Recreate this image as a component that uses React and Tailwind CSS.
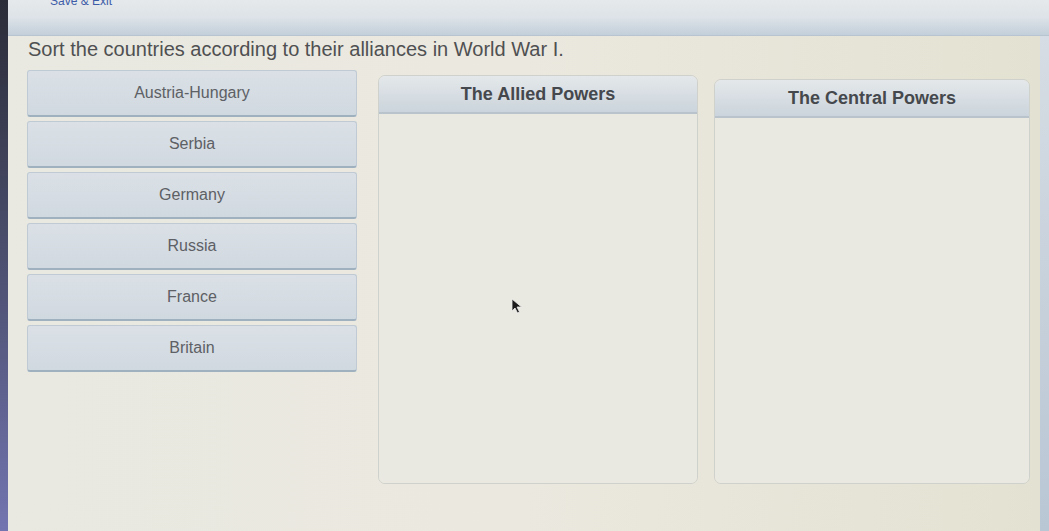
import React from "react";

const countries = ["Austria-Hungary", "Serbia", "Germany", "Russia", "France", "Britain"];

function DragItem({ label }) {
  return (
    <li className="flex h-[47px] items-center justify-center rounded-[3px] border border-[#bfcad4] border-b-2 border-b-[#9fb0bf] bg-gradient-to-b from-[#dae0e6] to-[#d1d9e0] text-[16px] text-[#5d6065]">
      {label}
    </li>
  );
}

function DropColumn({ title, className }) {
  return (
    <div className={`flex flex-col overflow-hidden rounded-[7px] border border-[#cfd1cc] ${className}`}>
      <div className="flex h-[38px] shrink-0 items-center justify-center border-b-2 border-[#b9c3cc] bg-gradient-to-b from-[#e4e8ea] to-[#cbd4dc] text-[18px] font-bold text-[#45484c]">
        {title}
      </div>
      <div className="flex-1 bg-[#eae9e1]" />
    </div>
  );
}

export default function App() {
  return (
    <div className="flex h-[531px] w-[1049px] overflow-hidden bg-[#e8e7de] font-['Liberation_Sans',Arial,sans-serif]">
      {/* window edge */}
      <div className="w-[8px] shrink-0 bg-gradient-to-b from-[#2a2c38] via-[#4d5070] to-[#7275b0]" />

      <div className="flex flex-1 flex-col">
        {/* toolbar */}
        <div className="relative h-[36px] shrink-0 border-b border-[#b8c5d1] bg-gradient-to-b from-[#e6e9eb] via-[#dde3e8] to-[#c3cfda]">
          <span className="absolute -top-[8px] left-[42px] text-[12px] text-[#3d5ca8]">Save &amp; Exit</span>
        </div>

        <div className="relative flex flex-1">
          <div className="flex flex-1 flex-col bg-gradient-to-r from-[#e9e9e1] via-[#ebe8df] to-[#e3e2d2]">
            <h1 className="ml-[20px] mt-[1px] text-[20px] leading-[24px] text-[#4f5052]">
              Sort the countries according to their alliances in World War I.
            </h1>

            <div className="mt-[8px] flex items-start">
              <ul className="ml-[19px] mt-[1px] flex w-[330px] flex-col gap-[4px]">
                {countries.map((c) => (
                  <DragItem key={c} label={c} />
                ))}
              </ul>
              <DropColumn title="The Allied Powers" className="ml-[21px] mt-[6px] h-[409px] w-[320px]" />
              <DropColumn title="The Central Powers" className="ml-[16px] mt-[10px] h-[405px] w-[316px]" />
            </div>
          </div>

          {/* pointer */}
          <svg className="absolute left-[503px] top-[262px]" width="12" height="16" viewBox="0 0 12 16">
            <path d="M1 1 L1 13 L4 10 L6.5 15 L8.5 14 L6 9 L10.5 9 Z" fill="#1b1b1b" stroke="#eee" strokeWidth="0.8" />
          </svg>

          <div className="w-[9px] shrink-0 bg-gradient-to-b from-[#d6dde4] to-[#b9c6d4]" />
        </div>
      </div>
    </div>
  );
}
